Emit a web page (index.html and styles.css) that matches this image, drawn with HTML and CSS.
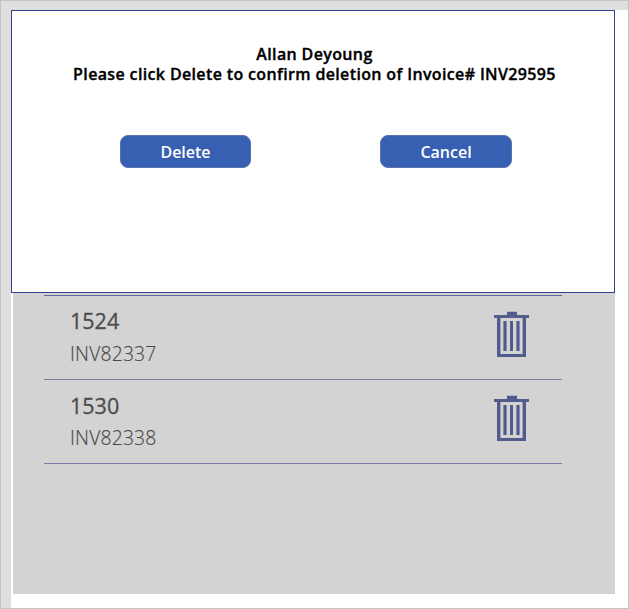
FILE: index.html
```html
<!DOCTYPE html>
<html lang="en">
<head>
<meta charset="utf-8">
<title>Invoices</title>
<link rel="stylesheet" href="styles.css">
</head>
<body>
<div class="app">
  <main class="screen">
    <section class="dialog" role="dialog">
      <p class="message">Allan Deyoung<br><span class="prompt">Please click Delete to confirm deletion of Invoice# INV29595</span></p>
      <div class="actions">
        <button class="btn">Delete</button>
        <button class="btn btn-cancel">Cancel</button>
      </div>
    </section>
    <section class="backdrop">
      <ul class="invoices">
        <li class="invoice">
          <div class="details">
            <div class="number">1524</div>
            <div class="code">INV82337</div>
          </div>
          <svg class="trash" viewBox="0 0 35 46">
            <path d="M13 .7h10V4h12v3H0V4h13z"/>
            <path fill-rule="evenodd" d="M3 6h29v40H3zM6.4 7v36.1h22.2V7z"/>
            <path d="M9.4 10h3.2v30H9.4zM16 10h3v30h-3zM22.4 10h3.2v30h-3.2z"/>
          </svg>
        </li>
        <li class="invoice">
          <div class="details">
            <div class="number">1530</div>
            <div class="code">INV82338</div>
          </div>
          <svg class="trash" viewBox="0 0 35 46">
            <path d="M13 .7h10V4h12v3H0V4h13z"/>
            <path fill-rule="evenodd" d="M3 6h29v40H3zM6.4 7v36.1h22.2V7z"/>
            <path d="M9.4 10h3.2v30H9.4zM16 10h3v30h-3zM22.4 10h3.2v30h-3.2z"/>
          </svg>
        </li>
      </ul>
    </section>
  </main>
</div>
</body>
</html>
```
FILE: styles.css
```css
* {
  box-sizing: border-box;
}

body {
  margin: 0;
  font-family: "Open Sans", sans-serif;
}

.app {
  width: 629px;
  height: 609px;
  padding: 9px 0 0 10px;
  border: 1px solid #c3c3c3;
  background: #dfdfdf;
}

.screen {
  height: 100%;
  background: #fff;
}

.dialog {
  width: 604px;
  height: 283px;
  padding: 33px 0 0 3px;
  border: 1px solid #31408c;
  background: #fff;
}

.message {
  margin: 0;
  font-size: 16px;
  font-weight: 600;
  letter-spacing: 0.36px;
  line-height: 20px;
  text-align: center;
  color: #000;
  white-space: nowrap;
  -webkit-text-stroke: 0.35px #000;
}

.actions {
  display: flex;
  gap: 129px;
  margin: 51px 0 0 105px;
}

.btn {
  width: 131px;
  height: 33px;
  padding: 1px 0 0;
  border: 1px solid #5873ad;
  border-radius: 8px;
  background: #3860b2;
  color: #fff;
  font: 600 16px/30px "Open Sans", sans-serif;
}

.btn-cancel {
  width: 132px;
}

.backdrop {
  width: 602px;
  height: 301px;
  margin-left: 2px;
  padding: 2px 53px 0 31px;
  background: #d3d3d3;
}

.invoices {
  margin: 0;
  padding: 0;
  list-style: none;
  border-top: 1px solid #62689c;
}

.invoice {
  display: flex;
  justify-content: space-between;
  height: 84px;
  padding: 9px 33px 0 26px;
  border-bottom: 1px solid #777cac;
}

.number {
  font-size: 21.5px;
  font-weight: 500;
  line-height: 32px;
  color: #4c4c4c;
  -webkit-text-stroke: 0.3px #4c4c4c;
}

.invoice + .invoice .number {
  padding-top: 1px;
  line-height: 31px;
}

.code {
  font-size: 19.3px;
  font-weight: 300;
  letter-spacing: 0.2px;
  line-height: 33px;
  color: #484848;
  -webkit-text-stroke: 0.15px #484848;
}

.trash {
  width: 35px;
  height: 46px;
  margin-top: 6px;
  fill: #515b8c;
}
```
